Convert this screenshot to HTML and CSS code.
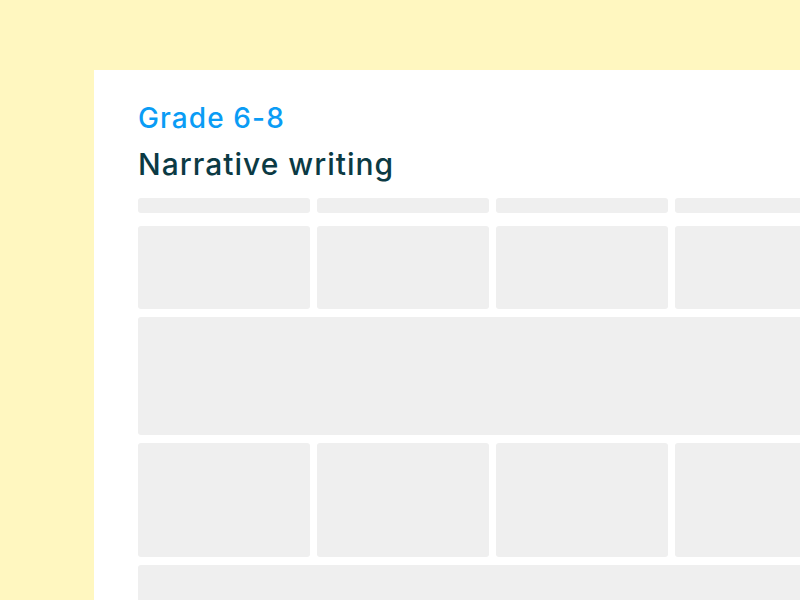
FILE: index.html
```html
<!DOCTYPE html>
<html>
    <head>
        <meta charset="utf-8">
        <title>Narrative writing</title>
        <link rel="stylesheet" href="styles.css">
    </head>
    <body>
        <div class="sheet">
            <p class="grade">Grade 6-8</p>
            <h1 class="title">Narrative writing</h1>

            <div class="grid">
                <div class="cell head"></div>
                <div class="cell head"></div>
                <div class="cell head"></div>
                <div class="cell head"></div>

                <div class="cell small"></div>
                <div class="cell small"></div>
                <div class="cell small"></div>
                <div class="cell small"></div>

                <div class="cell wide"></div>

                <div class="cell tall"></div>
                <div class="cell tall"></div>
                <div class="cell tall"></div>
                <div class="cell tall"></div>

                <div class="cell wide"></div>
            </div>
        </div>
    </body>
</html>
```

FILE: styles.css
```css
body{
    margin: 0;
    background-color: #fff7c0;
    font-family: 'Inter', 'Open Sans', sans-serif;
    overflow: hidden;
    height: 600px;
}

.sheet{
    box-sizing: border-box;
    margin: 70px 0 0 94px;
    height: 530px;
    overflow: hidden;
    background-color: #ffffff;
    padding: 30px 0 0 44px;
}

.grade{
    margin: 0;
    color: #0a9cf5;
    font-size: 28px;
    line-height: 36px;
    font-weight: 500;
    letter-spacing: 1.1px;
}

.title{
    margin: 8px 0 0 0;
    color: #0b3a44;
    font-size: 30px;
    line-height: 40px;
    font-weight: 500;
    letter-spacing: 1px;
}

.grid{
    margin-top: 14px;
    display: grid;
    grid-template-columns: repeat(4, 172px);
    column-gap: 7px;
    row-gap: 8px;
}

.cell{
    background-color: #efefef;
    border-radius: 3px;
}

.head{
    height: 15px;
    margin-bottom: 5px;
}

.small{
    height: 83px;
}

.wide{
    grid-column: 1 / -1;
    height: 118px;
}

.tall{
    height: 114px;
}
```
